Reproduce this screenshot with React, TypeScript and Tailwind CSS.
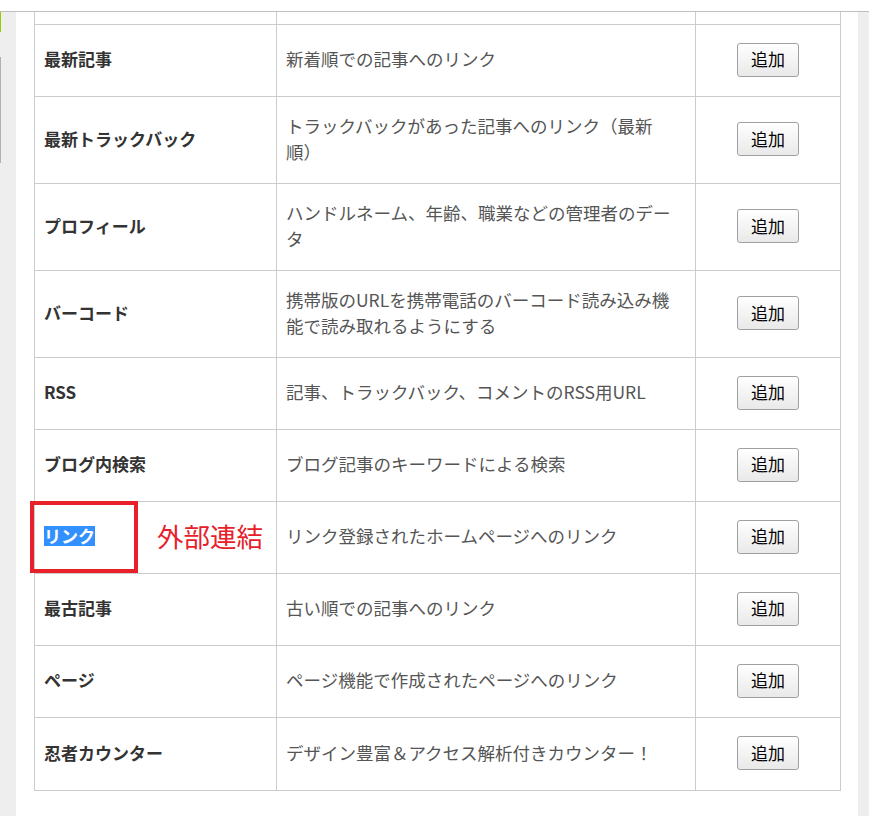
/**
 * ブログパーツ追加一覧（プラグイン表）
 */

import React from 'react';

interface Plugin {
  name: string;
  lines: string[];
  tall?: boolean;
  marked?: boolean;
}

const plugins: Plugin[] = [
  { name: '最新記事', lines: ['新着順での記事へのリンク'] },
  { name: '最新トラックバック', lines: ['トラックバックがあった記事へのリンク（最新', '順）'], tall: true },
  { name: 'プロフィール', lines: ['ハンドルネーム、年齢、職業などの管理者のデー', 'タ'], tall: true },
  { name: 'バーコード', lines: ['携帯版のURLを携帯電話のバーコード読み込み機', '能で読み取れるようにする'], tall: true },
  { name: 'RSS', lines: ['記事、トラックバック、コメントのRSS用URL'] },
  { name: 'ブログ内検索', lines: ['ブログ記事のキーワードによる検索'] },
  { name: 'リンク', lines: ['リンク登録されたホームページへのリンク'], marked: true },
  { name: '最古記事', lines: ['古い順での記事へのリンク'] },
  { name: 'ページ', lines: ['ページ機能で作成されたページへのリンク'] },
  { name: '忍者カウンター', lines: ['デザイン豊富＆アクセス解析付きカウンター！'] },
];

function AddButton() {
  return (
    <button className="w-[62px] h-[34px] pb-[2px] rounded-[3px] border border-[#a0a0a0] bg-gradient-to-b from-white to-[#e9e9e9] text-[17px] leading-none text-black">
      追加
    </button>
  );
}

export default function App() {
  return (
    <div
      className="w-[869px] h-[816px] overflow-hidden bg-white"
      style={{ fontFamily: '"Noto Sans CJK JP", "Noto Sans", sans-serif' }}
    >
      <div className="h-[11px]" />
      <div className="h-px bg-[#bdbdbd]" />

      <div className="flex h-[804px]">
        {/* 左サイドバー */}
        <aside className="w-[16px] bg-[#eeeeee] flex flex-col">
          <div className="h-[20px] w-px bg-[#99cc00]" />
          <div className="h-[25px]" />
          <div className="h-[106px] w-px bg-[#b0b0b0]" />
        </aside>

        {/* 本文 */}
        <main className="w-[842px] pl-[18px]">
          <div className="w-[807px] border-x border-b border-[#cccccc]">
            {/* 上で切れている行 */}
            <div className="grid grid-cols-[242px_419px_144px] h-[13px] border-b border-[#cccccc]">
              <div className="border-r border-[#cccccc]" />
              <div className="border-r border-[#cccccc]" />
              <div />
            </div>

            {plugins.map((p, i) => (
              <div
                key={p.name}
                className={`relative grid grid-cols-[242px_419px_144px] ${
                  p.tall ? 'h-[87px]' : 'h-[72px]'
                } ${i < plugins.length - 1 ? 'border-b border-[#cccccc]' : ''}`}
              >
                <div className="flex items-center pl-[9px] pb-[3px] border-r border-[#cccccc]">
                  <span
                    className={`text-[17px] font-bold leading-[20px] ${
                      p.marked ? 'bg-[#3390ff] text-white' : 'text-[#333333]'
                    }`}
                  >
                    {p.name}
                  </span>
                </div>
                <div className="flex flex-col justify-center pl-[9px] pb-[3px] border-r border-[#cccccc] text-[17.5px] leading-[26px] text-[#555555]">
                  {p.lines.map((l) => (
                    <span key={l} className="whitespace-nowrap">
                      {l}
                    </span>
                  ))}
                </div>
                <div className="flex items-center justify-center pb-[2px]">
                  <AddButton />
                </div>

                {p.marked && (
                  <>
                    <div className="absolute left-[-5px] top-[-1px] w-[108px] h-[72px] border-4 border-[#e8202a]" />
                    <div className="absolute left-[122px] top-0 h-full pb-[3px] flex items-center text-[26.5px] leading-none text-[#e8202a]">
                      外部連結
                    </div>
                  </>
                )}
              </div>
            ))}
          </div>
        </main>

        {/* 右スクロール領域 */}
        <div className="w-[11px] bg-[#eeeeee]" />
      </div>
    </div>
  );
}
